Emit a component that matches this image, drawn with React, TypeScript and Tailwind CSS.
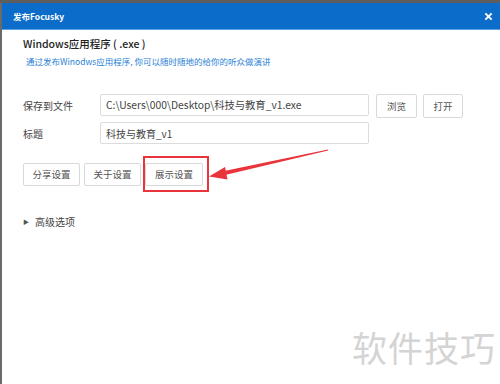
import React from 'react';

const font = { fontFamily: '"Noto Sans CJK SC", "Liberation Sans", sans-serif' };

const Btn: React.FC<{ label: string; className?: string }> = ({ label, className }) => (
  <button className={`border border-[#d9d9d9] rounded-[2px] bg-white text-[9.5px] text-[#555] ${className ?? ''}`}>
    {label}
  </button>
);

const App: React.FC = () => {
  return (
    <div className="relative w-[500px] h-[384px] overflow-hidden bg-white flex flex-col" style={font}>
      {/* background app strip */}
      <div className="h-[3px] bg-[#5e5e5e]" />
      <div className="flex flex-1">
        <div className="w-[2px] bg-[#6a6a6a]" />
        <div className="flex-1 flex flex-col">
          {/* Title bar */}
          <div className="h-[27px] bg-[#0b6cc9] border-b border-[#5aa2e6] flex items-center justify-between pl-[11px] pr-[7px]">
            <span className="text-[8.5px] font-bold text-white">发布Focusky</span>
            <svg width="9" height="9" viewBox="0 0 10 10">
              <path d="M1.5 1.5 L8.5 8.5 M8.5 1.5 L1.5 8.5" stroke="white" strokeWidth="2.2" />
            </svg>
          </div>

          <div className="pl-[21px] pt-[6px]">
            <div className="text-[10.5px] font-medium text-[#222] leading-[16px]">Windows应用程序 ( .exe )</div>
            <div className="mt-[3px] pl-[3px] text-[8.5px] text-[#1f7fd6] leading-[12px]">
              通过发布Winodws应用程序, 你可以随时随地的给你的听众做演讲
            </div>

            {/* form rows */}
            <div className="mt-[27px] flex items-start">
              <span className="w-[77px] h-[22px] flex items-center text-[10px] text-[#444]">保存到文件</span>
              <div className="w-[269px] h-[22px] border border-[#dcdcdc] rounded-[2px] flex items-center pl-[5px] text-[10.3px] text-[#444]">
                C:\Users\000\Desktop\科技与教育_v1.exe
              </div>
              <Btn label="浏览" className="ml-[7px] w-[41px] h-[24px]" />
              <Btn label="打开" className="ml-[6px] w-[40px] h-[24px]" />
            </div>
            <div className="mt-[4px] flex items-center">
              <span className="w-[77px] text-[10px] text-[#444]">标题</span>
              <div className="w-[269px] h-[22px] border border-[#dcdcdc] rounded-[2px] flex items-center pl-[5px] text-[10px] text-[#444]">
                科技与教育_v1
              </div>
            </div>

            {/* settings buttons */}
            <div className="mt-[12px] flex items-center">
              <Btn label="分享设置" className="w-[57px] h-[23px]" />
              <Btn label="关于设置" className="ml-[4px] w-[57px] h-[23px]" />
              <div className="ml-[2px] h-[36px] border-2 border-[#e8343a] pr-[4px] flex items-center">
                <Btn label="展示设置" className="w-[58px] h-[23px]" />
              </div>
            </div>

            <div className="mt-[22px] h-[14px] flex items-center">
              <span className="text-[6px] text-[#555] mr-[6px]">▶</span>
              <span className="text-[10px] text-[#444]">高级选项</span>
            </div>
          </div>
        </div>
      </div>

      {/* red arrow annotation */}
      <svg className="absolute left-0 top-0 pointer-events-none" width="500" height="384">
        <path d="M328 149.6 L328.2 150.4 L225 175 L224.2 171 Z" fill="#e8343a" />
        <path d="M209 176.5 L225 167 L227.5 179.5 Z" fill="#e8343a" />
      </svg>

      {/* watermark */}
      <div className="absolute left-[352px] top-[321px] text-[35px] text-[#d4d4d4] tracking-[1px]">软件技巧</div>
    </div>
  );
};

export default App;
